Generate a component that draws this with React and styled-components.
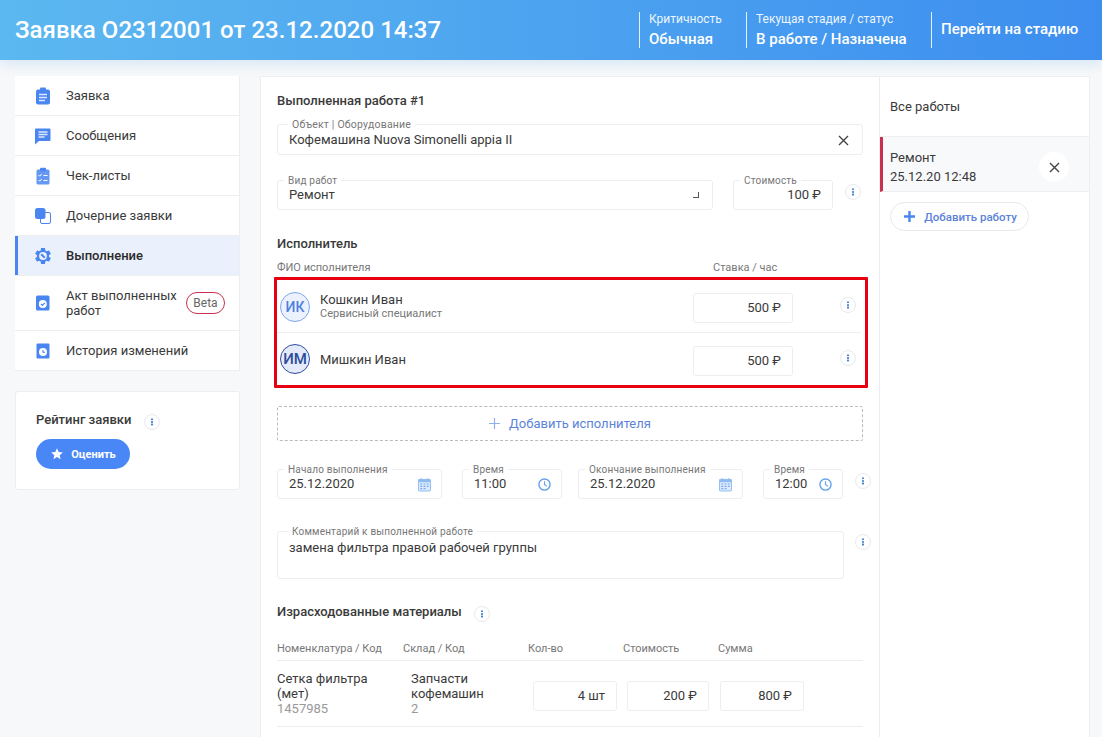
import React from 'react';
import styled, { createGlobalStyle } from 'styled-components';
import { MdSettings, MdStar } from 'react-icons/md';

const GlobalStyle = createGlobalStyle`
  html, body {
    margin: 0;
    height: 100%;
    overflow: hidden;
    background: #f7f8f9;
    color: #3a3a3a;
    font-family: Roboto, "Liberation Sans", sans-serif;
    font-size: 13px;
  }
  * { box-sizing: border-box; }
`;

const Header = styled.header`
  height: 60px;
  display: flex;
  align-items: center;
  justify-content: space-between;
  padding: 0 24px 0 15px;
  background: linear-gradient(90deg, #5cb8f0 0%, #3d8eef 100%);
  box-shadow: 0 4px 12px rgba(90, 170, 235, 0.22);
  color: #fff;
`;

const PageTitle = styled.h1`
  margin: 0;
  font-size: 24px;
  font-weight: 500;
  letter-spacing: 0.03px;
`;

const HeaderInfo = styled.div`
  display: flex;
  height: 36px;
  margin-top: -1px;
`;

const HeaderBlock = styled.div`
  width: ${(p) => p.$w}px;
  border-left: 1px solid rgba(255, 255, 255, 0.85);
  padding-left: 9px;
  display: flex;
  flex-direction: column;
  white-space: nowrap;
  justify-content: ${(p) => (p.$center ? 'center' : 'space-between')};
`;

const HeaderLabel = styled.span`
  font-size: 12px;
  line-height: 14px;
  opacity: 0.9;
`;

const HeaderValue = styled.span`
  font-size: 15px;
  line-height: 17px;
  font-weight: 500;
`;

const Content = styled.div`
  display: flex;
  gap: 20px;
  padding: 16px 12px 0 15px;
  height: 677px;
  overflow: hidden;
`;

const Sidebar = styled.aside`
  width: 225px;
  flex: none;
`;

const Menu = styled.nav`
  background: #fff;
  border-right: 1px solid #eceef0;
`;

const MenuItem = styled.div`
  position: relative;
  display: flex;
  align-items: center;
  height: ${(p) => p.$h || 40}px;
  padding-left: 51px;
  border-bottom: 1px solid #eceef0;
  color: ${(p) => (p.$active ? '#2a2a2a' : '#3a3a3a')};
  background: ${(p) => (p.$active ? '#eaf1fd' : '#fff')};
  box-shadow: ${(p) => (p.$active ? 'inset 3px 0 0 #4a86f0' : 'none')};
  font-weight: ${(p) => (p.$active ? 500 : 400)};
  line-height: 15px;
`;

const MenuIcon = styled.span`
  position: absolute;
  left: 19px;
  top: 50%;
  transform: translateY(-50%);
  display: flex;
  color: #4a86f0;
`;

const MenuText = styled.span`
  width: ${(p) => (p.$narrow ? '115px' : 'auto')};
`;

const BetaTag = styled.span`
  margin-left: 5px;
  width: 39px;
  height: 22px;
  border: 1px solid #c9304f;
  border-radius: 11px;
  display: flex;
  align-items: center;
  justify-content: center;
  font-size: 12px;
  color: #666;
`;

const RatingCard = styled.section`
  margin-top: 20px;
  height: 99px;
  background: #fff;
  border: 1px solid #eceef0;
  border-radius: 3px;
  padding: 19px 20px;
`;

const RatingHead = styled.div`
  display: flex;
  align-items: center;
  gap: 13px;
  font-weight: 500;
  height: 16px;
`;

const RateButton = styled.button`
  margin-top: 12px;
  width: 94px;
  height: 30px;
  border: 0;
  border-radius: 15px;
  background: #4a87f6;
  color: #fff;
  font-family: inherit;
  font-size: 11px;
  font-weight: 700;
  display: flex;
  align-items: center;
  justify-content: center;
  gap: 7px;
`;

const Panel = styled.div`
  flex: 1;
  display: flex;
  background: #fff;
  border: 1px solid #eceef0;
  border-bottom: 0;
`;

const Main = styled.main`
  width: 619px;
  flex: none;
  padding: 16px 16px 0;
  border-right: 1px solid #eceef0;
`;

const Works = styled.div`
  flex: 1;
`;

const WorksTitle = styled.div`
  height: 60px;
  padding: 0 10px;
  display: flex;
  align-items: center;
  border-bottom: 1px solid #eceef0;
`;

const WorkItem = styled.div`
  height: 55px;
  padding: 6px 20px 0 7px;
  border-left: 3px solid #c9304f;
  border-bottom: 1px solid #eceef0;
  background: #f8f9fb;
  display: flex;
  align-items: center;
  justify-content: space-between;
  line-height: 19px;
`;

const WorkClose = styled.span`
  width: 30px;
  height: 30px;
  border-radius: 50%;
  background: #fff;
  display: flex;
  align-items: center;
  justify-content: center;
`;

const AddWork = styled.button`
  margin: 10px 0 0 10px;
  width: 139px;
  height: 29px;
  padding: 0 0 0 2px;
  border: 1px solid #e6e9ee;
  border-radius: 15px;
  background: #fff;
  color: #5b84d8;
  font-family: inherit;
  font-size: 11.5px;
  font-weight: 500;
  display: flex;
  align-items: center;
  justify-content: center;
  gap: 9px;
`;

const SectionTitle = styled.div`
  margin-top: ${(p) => p.$mt || 0}px;
  display: flex;
  align-items: center;
  gap: 12px;
  height: 16px;
  line-height: 16px;
  font-weight: 500;
  color: #3a3a3a;
`;

const Row = styled.div`
  display: flex;
  align-items: flex-start;
  margin-top: ${(p) => p.$mt || 0}px;
`;

const Field = styled.div`
  position: relative;
  flex: none;
  width: ${(p) => p.$w}px;
  height: ${(p) => p.$h || 30}px;
  margin-left: ${(p) => p.$ml || 0}px;
  margin-top: ${(p) => p.$mt || 0}px;
  border: 1px solid #eceef0;
  border-radius: 3px;
  background: #fff;
  padding: ${(p) => (p.$right ? '0 11px 0 0' : `${p.$pt || 0}px 11px 0`)};
  display: flex;
  align-items: ${(p) => (p.$top ? 'flex-start' : 'center')};
  justify-content: ${(p) => (p.$right ? 'flex-end' : 'space-between')};
  font-size: 13px;
  line-height: 16px;
`;

const FieldLabel = styled.label`
  position: absolute;
  top: -6px;
  left: ${(p) => p.$left || 6}px;
  padding: 0 4px;
  background: #fff;
  color: #777;
  font-size: ${(p) => p.$fs || 10}px;
  line-height: 12px;
  letter-spacing: 0.2px;
  white-space: nowrap;
`;

const CommentText = styled.span`
  margin-top: 8px;
`;

const FieldAction = styled.span`
  display: flex;
  margin-right: 2px;
`;

const FieldIcon = styled.span`
  display: flex;
  margin-right: -1px;
`;

const SelectCorner = styled.i`
  width: 6px;
  height: 6px;
  margin-right: 2px;
  border-right: 1px solid #555;
  border-bottom: 1px solid #555;
`;

const ColumnLabel = styled.span`
  color: #777;
  font-size: 11px;
  line-height: 14px;
  width: ${(p) => p.$w}px;
  flex: none;
`;

const Marked = styled.div`
  margin: 2px -5px 0 -3px;
  height: 111px;
  border: 3px solid #e60012;
  padding: 1px 4px 0 0;
  border-radius: 1px;
`;

const Person = styled.div`
  height: ${(p) => p.$h}px;
  display: flex;
  align-items: center;
  border-bottom: ${(p) => (p.$divider ? '1px solid #eceef0' : '0')};
`;

const Avatar = styled.span`
  width: 30px;
  height: 30px;
  border-radius: 50%;
  flex: none;
  margin-left: 3px;
  display: flex;
  align-items: center;
  justify-content: center;
  border: 1px solid ${(p) => (p.$dark ? '#2f4ea0' : '#7ea6ee')};
  background: ${(p) => (p.$dark ? '#e4eafa' : '#ebf2fd')};
  color: ${(p) => (p.$dark ? '#2d4b9a' : '#4f7fe0')};
  font-weight: 500;
  font-size: ${(p) => (p.$dark ? 15 : 14)}px;
`;

const PersonInfo = styled.div`
  width: 373px;
  flex: none;
  margin-left: 10px;
  margin-bottom: ${(p) => p.$mb || 0}px;
`;

const PersonName = styled.div`
  line-height: 15px;
`;

const PersonRole = styled.div`
  font-size: 11px;
  line-height: 13px;
  color: #777;
`;

const InfoWrap = styled.span`
  width: 16px;
  height: 16px;
  flex: none;
  border: 1px solid #e6e9ee;
  border-radius: 50%;
  background: #fff;
  display: flex;
  align-items: center;
  justify-content: center;
  margin-left: ${(p) => p.$ml || 0}px;
  margin-top: ${(p) => p.$mt || 0}px;
`;

const AddPerson = styled.div`
  margin-top: 18px;
  height: 35px;
  border: 1px dashed #bbb;
  border-radius: 2px;
  display: flex;
  align-items: center;
  justify-content: center;
  gap: 9px;
  color: #5b84d8;
`;

const MaterialsHead = styled.div`
  display: flex;
  margin-top: 22px;
  height: 19px;
  border-bottom: 1px solid #eceef0;
`;

const MaterialRow = styled.div`
  height: 66px;
  display: flex;
  align-items: center;
  border-bottom: 1px solid #eceef0;
`;

const Cell = styled.div`
  width: ${(p) => p.$w}px;
  flex: none;
  padding-right: 24px;
  line-height: 15px;
`;

const Muted = styled.div`
  color: #999;
`;

const GearWrap = styled.span`
  position: relative;
  display: flex;
  margin-left: -1px;
  svg + svg {
    position: absolute;
    left: 0;
    top: 0;
  }
`;

const ClipboardIcon = () => (
  <svg width="18" height="18" viewBox="0 0 18 18">
    <rect x="2" y="2.5" width="14" height="15" rx="2" fill="currentColor" />
    <rect x="6" y="0.5" width="6" height="4" rx="1" fill="currentColor" />
    <path d="M5 7.5h8M5 10.5h8M5 13.5h6" stroke="#dbe7fc" strokeWidth="1.4" />
  </svg>
);

const MessageIcon = () => (
  <svg width="18" height="18" viewBox="0 0 18 18">
    <path d="M2 1.5h13.5a1 1 0 0 1 1 1v10.5a1 1 0 0 1-1 1H5l-4 3.5V2.5a1 1 0 0 1 1-1z" fill="currentColor" />
    <path d="M4.5 5h9M4.5 7.5h9M4.5 10h6" stroke="#dbe7fc" strokeWidth="1.3" />
  </svg>
);

const ChecklistIcon = () => (
  <svg width="18" height="18" viewBox="0 0 18 18">
    <rect x="2.5" y="2.5" width="13" height="15" rx="1.5" fill="currentColor" opacity="0.85" />
    <rect x="6" y="0.8" width="6" height="3.5" rx="1" fill="currentColor" />
    <path d="M4.5 8l1.2 1.2 2-2.2M4.5 13l1.2 1.2 2-2.2" stroke="#fff" strokeWidth="1" fill="none" />
    <path d="M9.5 8.5h4M9.5 13.5h4" stroke="#fff" strokeWidth="1.2" />
  </svg>
);

const ChildIcon = () => (
  <svg width="18" height="18" viewBox="0 0 18 18">
    <rect x="6.5" y="5.5" width="10" height="11" rx="1.5" fill="#fff" stroke="currentColor" />
    <rect x="1" y="1" width="10.5" height="11" rx="2.5" fill="currentColor" />
  </svg>
);

const GearIcon = () => (
  <GearWrap>
    <MdSettings size={20} />
    <svg width="20" height="20" viewBox="0 0 20 20">
      <circle cx="10" cy="10" r="3.9" fill="#eaf1fd" />
      <path d="M8.2 8.2l3.6 3.6" stroke="currentColor" strokeWidth="2" />
    </svg>
  </GearWrap>
);

const ActIcon = () => (
  <svg width="18" height="18" viewBox="0 0 18 18">
    <rect x="2" y="1.5" width="13.5" height="15" rx="1.5" fill="currentColor" />
    <circle cx="8.8" cy="10" r="4" fill="#fff" />
    <path d="M7 10l1.4 1.4 2.4-2.6" stroke="currentColor" strokeWidth="1.2" fill="none" />
  </svg>
);

const HistoryIcon = () => (
  <svg width="18" height="18" viewBox="0 0 18 18">
    <rect x="2.5" y="1.5" width="13" height="15" rx="1" fill="currentColor" />
    <circle cx="9" cy="10" r="4" fill="#fff" />
    <path d="M9 8v2.3h2" stroke="currentColor" strokeWidth="1.1" fill="none" />
  </svg>
);

const CloseIcon = () => (
  <svg width="11" height="11" viewBox="0 0 11 11">
    <path d="M1 1l9 9M10 1l-9 9" stroke="#444" strokeWidth="1.4" />
  </svg>
);

const InfoIcon = ({ ml, mt }) => (
  <InfoWrap $ml={ml} $mt={mt}>
    <svg width="4" height="8" viewBox="0 0 4 8">
      <circle cx="2" cy="1.2" r="1" fill="#3f7fce" />
      <rect x="1" y="3.2" width="2" height="1.6" fill="#3f7fce" />
      <rect x="1" y="5.6" width="2" height="1.8" fill="#3f7fce" />
    </svg>
  </InfoWrap>
);

const CalendarIcon = () => (
  <FieldIcon>
    <svg width="13" height="15" viewBox="0 0 14 15">
      <rect x="0.5" y="2" width="13" height="12.5" rx="1" fill="#dbe9fc" stroke="#8dbbf0" />
      <rect x="0.5" y="2" width="13" height="3" fill="#8dbbf0" />
      <path d="M3.5 0.5v2.5M10.5 0.5v2.5" stroke="#8dbbf0" />
      <path d="M2.5 7h2M6 7h2M9.5 7h2M2.5 9.5h2M6 9.5h2M9.5 9.5h2M2.5 12h2M6 12h2" stroke="#74a8ea" strokeWidth="1.2" />
    </svg>
  </FieldIcon>
);

const ClockIcon = () => (
  <FieldIcon>
    <svg width="13" height="13" viewBox="0 0 14 14">
      <circle cx="7" cy="7" r="6" fill="none" stroke="#62a3ea" strokeWidth="1.5" />
      <path d="M7 3.5V7l2.5 2" fill="none" stroke="#62a3ea" strokeWidth="1.2" />
    </svg>
  </FieldIcon>
);

const PlusIcon = ({ color, width = 1.2 }) => (
  <svg width="11" height="11" viewBox="0 0 11 11">
    <path d="M5.5 0v11M0 5.5h11" stroke={color} strokeWidth={width} />
  </svg>
);

const menu = [
  { title: 'Заявка', icon: <ClipboardIcon /> },
  { title: 'Сообщения', icon: <MessageIcon /> },
  { title: 'Чек-листы', icon: <ChecklistIcon /> },
  { title: 'Дочерние заявки', icon: <ChildIcon /> },
  { title: 'Выполнение', icon: <GearIcon />, active: true },
  { title: 'Акт выполненных работ', icon: <ActIcon />, beta: true, h: 55 },
  { title: 'История изменений', icon: <HistoryIcon /> },
];

export default function App() {
  return (
    <>
      <GlobalStyle />
      <Header>
        <PageTitle>Заявка O2312001 от 23.12.2020 14:37</PageTitle>
        <HeaderInfo>
          <HeaderBlock $w={107}>
            <HeaderLabel>Критичность</HeaderLabel>
            <HeaderValue>Обычная</HeaderValue>
          </HeaderBlock>
          <HeaderBlock $w={185}>
            <HeaderLabel>Текущая стадия / статус</HeaderLabel>
            <HeaderValue>В работе / Назначена</HeaderValue>
          </HeaderBlock>
          <HeaderBlock $w={147} $center>
            <HeaderValue>Перейти на стадию</HeaderValue>
          </HeaderBlock>
        </HeaderInfo>
      </Header>
      <Content>
        <Sidebar>
          <Menu>
            {menu.map((item) => (
              <MenuItem key={item.title} $active={item.active} $h={item.h}>
                <MenuIcon>{item.icon}</MenuIcon>
                <MenuText $narrow={item.beta}>{item.title}</MenuText>
                {item.beta && <BetaTag>Beta</BetaTag>}
              </MenuItem>
            ))}
          </Menu>
          <RatingCard>
            <RatingHead>
              Рейтинг заявки
              <InfoIcon mt={6} />
            </RatingHead>
            <RateButton>
              <MdStar size={14} />
              Оценить
            </RateButton>
          </RatingCard>
        </Sidebar>
        <Panel>
          <Main>
            <SectionTitle>Выполненная работа #1</SectionTitle>
            <Row $mt={15}>
              <Field $w={586} $h={31} $pt={1}>
                <FieldLabel $left={10} $fs={10.5}>Объект | Оборудование</FieldLabel>
                Кофемашина Nuova Simonelli appia II
                <FieldAction>
                  <CloseIcon />
                </FieldAction>
              </Field>
            </Row>
            <Row $mt={25}>
              <Field $w={436}>
                <FieldLabel>Вид работ</FieldLabel>
                Ремонт
                <SelectCorner />
              </Field>
              <Field $w={100} $ml={20} $right>
                <FieldLabel>Стоимость</FieldLabel>
                100 ₽
              </Field>
              <InfoIcon ml={12} mt={4} />
            </Row>
            <SectionTitle $mt={26}>Исполнитель</SectionTitle>
            <Row $mt={9}>
              <ColumnLabel $w={436}>ФИО исполнителя</ColumnLabel>
              <ColumnLabel $w={100}>Ставка / час</ColumnLabel>
            </Row>
            <Marked>
              <Person $h={52} $divider>
                <Avatar>ИК</Avatar>
                <PersonInfo $mb={2}>
                  <PersonName>Кошкин Иван</PersonName>
                  <PersonRole>Сервисный специалист</PersonRole>
                </PersonInfo>
                <Field $w={100} $mt={3} $right>500 ₽</Field>
                <InfoIcon ml={47} mt={-3} />
              </Person>
              <Person $h={51}>
                <Avatar $dark>ИМ</Avatar>
                <PersonInfo $mb={-2}>
                  <PersonName>Мишкин Иван</PersonName>
                </PersonInfo>
                <Field $w={100} $mt={5} $right>500 ₽</Field>
                <InfoIcon ml={47} mt={-1} />
              </Person>
            </Marked>
            <AddPerson>
              <PlusIcon color="#8fb0ea" />
              Добавить исполнителя
            </AddPerson>
            <Row $mt={28}>
              <Field $w={165}>
                <FieldLabel>Начало выполнения</FieldLabel>
                25.12.2020
                <CalendarIcon />
              </Field>
              <Field $w={100} $ml={20}>
                <FieldLabel>Время</FieldLabel>
                11:00
                <ClockIcon />
              </Field>
              <Field $w={165} $ml={16}>
                <FieldLabel>Окончание выполнения</FieldLabel>
                25.12.2020
                <CalendarIcon />
              </Field>
              <Field $w={80} $ml={20}>
                <FieldLabel>Время</FieldLabel>
                12:00
                <ClockIcon />
              </Field>
              <InfoIcon ml={12} mt={4} />
            </Row>
            <Row $mt={32}>
              <Field $w={567} $h={48} $top>
                <FieldLabel $left={10}>Комментарий к выполненной работе</FieldLabel>
                <CommentText>замена фильтра правой рабочей группы</CommentText>
              </Field>
              <InfoIcon ml={11} mt={3} />
            </Row>
            <SectionTitle $mt={25}>
              Израсходованные материалы
              <InfoIcon mt={3} />
            </SectionTitle>
            <MaterialsHead>
              <ColumnLabel $w={126}>Номенклатура / Код</ColumnLabel>
              <ColumnLabel $w={125}>Склад / Код</ColumnLabel>
              <ColumnLabel $w={95}>Кол-во</ColumnLabel>
              <ColumnLabel $w={95}>Стоимость</ColumnLabel>
              <ColumnLabel $w={80}>Сумма</ColumnLabel>
            </MaterialsHead>
            <MaterialRow>
              <Cell $w={134}>
                Сетка фильтра (мет)
                <Muted>1457985</Muted>
              </Cell>
              <Cell $w={122}>
                Запчасти кофемашин
                <Muted>2</Muted>
              </Cell>
              <Field $w={84} $mt={5} $right>4 шт</Field>
              <Field $w={82} $ml={10} $mt={5} $right>200 ₽</Field>
              <Field $w={84} $ml={11} $mt={5} $right>800 ₽</Field>
            </MaterialRow>
          </Main>
          <Works>
            <WorksTitle>Все работы</WorksTitle>
            <WorkItem>
              <div>
                Ремонт
                <br />
                25.12.20 12:48
              </div>
              <WorkClose>
                <CloseIcon />
              </WorkClose>
            </WorkItem>
            <AddWork>
              <PlusIcon color="#4a86f0" width={2.4} />
              Добавить работу
            </AddWork>
          </Works>
        </Panel>
      </Content>
    </>
  );
}
